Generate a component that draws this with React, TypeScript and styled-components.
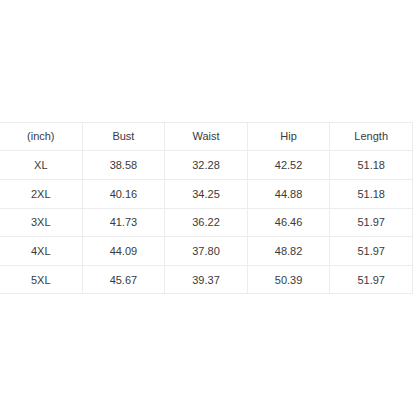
import React from "react";
import styled, { createGlobalStyle } from "styled-components";

const Global = createGlobalStyle`
  html, body { margin: 0; padding: 0; background: #fff; }
  body { font-family: "Liberation Sans", Arial, sans-serif; }
`;

const Page = styled.div`
  width: 416px;
  height: 416px;
  display: flex;
  align-items: center;
  justify-content: flex-start;
  background: #fff;
`;

const Table = styled.div`
  width: 413px;
  display: grid;
  grid-template-columns: repeat(5, 1fr);
  grid-auto-rows: 28.67px;
  border-top: 1px solid #ececec;
  box-sizing: border-box;
`;

const Cell = styled.div`
  display: flex;
  align-items: center;
  justify-content: center;
  border-right: 1px solid #ececec;
  border-bottom: 1px solid #ececec;
  font-size: 11px;
  color: #3a3a3a;
  box-sizing: border-box;
`;

const rows = [
  ["(inch)", "Bust", "Waist", "Hip", "Length"],
  ["XL", "38.58", "32.28", "42.52", "51.18"],
  ["2XL", "40.16", "34.25", "44.88", "51.18"],
  ["3XL", "41.73", "36.22", "46.46", "51.97"],
  ["4XL", "44.09", "37.80", "48.82", "51.97"],
  ["5XL", "45.67", "39.37", "50.39", "51.97"],
];

export default function App() {
  return (
    <>
      <Global />
      <Page>
        <Table>
          {rows.map((r, i) =>
            r.map((c, j) => <Cell key={`${i}-${j}`}>{c}</Cell>)
          )}
        </Table>
      </Page>
    </>
  );
}
